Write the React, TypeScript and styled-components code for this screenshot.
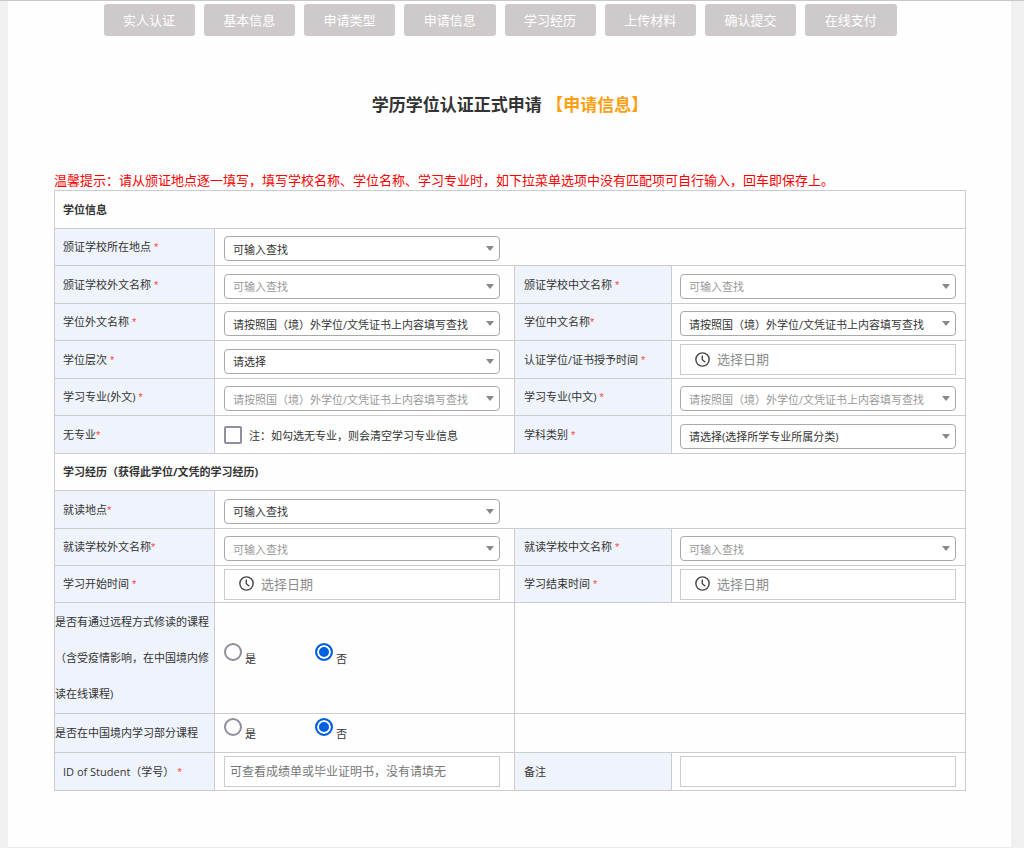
import React from "react";
import styled, { createGlobalStyle, css } from "styled-components";

const line = "#cccccf";
const labelBg = "#eff3fb";
const ink = "#333";
const muted = "#999";

const GlobalStyle = createGlobalStyle`
  *, *::before, *::after { box-sizing: border-box; }
  body {
    margin: 0;
    background: #f0f0f0;
    color: ${ink};
    font-family: "Open Sans", "Noto Sans CJK SC", sans-serif;
    font-size: 11px;
  }
  button, input, select { font-family: inherit; }
`;

const Page = styled.div`
  min-height: 100vh;
  padding: 0 13px 0 8px;
  border-top: 1px solid #c8c8c8;
`;

const Panel = styled.main`
  min-height: calc(100vh - 1px);
  padding: 3px 45px 56px 46px;
  background: #fefefe;
  border-bottom: 1px solid #ececec;
`;

const Steps = styled.nav`
  display: flex;
  justify-content: center;
  padding-right: 20px;
`;

const StepList = styled.div`
  display: grid;
  grid-template-columns: repeat(8, 1fr);
  gap: 9px;
  width: 100%;
  max-width: 793px;
`;

const StepButton = styled.button`
  height: 32px;
  padding: 0;
  border: 0;
  border-radius: 3px;
  background: #cec9ca;
  color: #fff;
  font-size: 13px;
  line-height: 32px;
  white-space: nowrap;
`;

const Title = styled.h1`
  margin: 57px 0 0;
  font-size: 17px;
  line-height: 24px;
  font-weight: 700;
  text-align: center;
`;

const Stage = styled.span`
  color: #ff9f0f;
`;

const Notice = styled.p`
  margin: 53px 0 0;
  color: #ff0000;
  font-size: 13px;
  line-height: 20px;
`;

const FormGrid = styled.form`
  border: 1px solid ${line};
  border-bottom: 0;
`;

const Row = styled.div<{ $size?: "normal" | "medium" | "tall" }>`
  display: grid;
  grid-template-columns: minmax(0, 159fr) minmax(0, 300fr) minmax(0, 157fr) minmax(0, 294fr);
  min-height: ${(p) => (p.$size === "tall" ? 111 : p.$size === "medium" ? 39 : 37)}px;
  border-bottom: 1px solid ${line};

  ${(p) =>
    !p.$size &&
    css`
      &:nth-child(odd),
      &:last-child {
        min-height: 38px;
      }
    `}
`;

const SectionTitle = styled.h2`
  grid-column: 1 / -1;
  align-self: center;
  margin: 0;
  padding: 0 8px;
  font-size: 11px;
  line-height: 36px;
  font-weight: 700;
`;

const LabelCell = styled.div<{ $flush?: boolean }>`
  display: flex;
  align-items: center;
  padding: 0 ${(p) => (p.$flush ? 0 : 8)}px;
  background: ${labelBg};
  line-height: 36px;

  & + div,
  div + & {
    border-left: 1px solid ${line};
  }
  div + & {
    padding-left: 9px;
  }
`;

const FieldCell = styled.div<{ $span?: boolean }>`
  display: flex;
  align-items: center;
  padding: 0 10px 0 9px;
  ${(p) => p.$span && "grid-column: 2 / -1;"}

  &:nth-child(4) {
    padding: 0 9px 0 8px;
  }
`;

const EmptyCell = styled.div`
  grid-column: 3 / -1;
  border-left: 1px solid ${line};
`;

const Star = styled.span`
  color: #ff4444;
  font-family: "Liberation Sans", sans-serif;
`;

const SelectBox = styled.div`
  display: grid;
  align-items: center;
  width: 100%;
  max-width: 276px;
  margin-top: 3px;

  & > * {
    grid-area: 1 / 1;
  }
`;

const Select = styled.select<{ $muted?: boolean }>`
  appearance: none;
  width: 100%;
  height: 25px;
  padding: 1px 24px 0 8px;
  border: 1px solid #a9a9a9;
  border-radius: 4px;
  background: #fff;
  color: ${(p) => (p.$muted ? muted : ink)};
  font-size: 11px;
`;

const Arrow = styled.span`
  justify-self: end;
  margin-right: 6px;
  border: 4px solid transparent;
  border-top: 5px solid #888;
  border-bottom: 0;
  pointer-events: none;
`;

const InputFrame = styled.div`
  display: flex;
  align-items: center;
  gap: 7px;
  width: 100%;
  max-width: 276px;
  height: 31px;
  padding: 0 5px 1px 14px;
  border: 1px solid ${line};
  background: #fff;
`;

const BareInput = styled.input`
  flex: 1;
  min-width: 0;
  padding: 0;
  border: 0;
  outline: 0;
  background: none;
  color: ${ink};
  font-size: 13px;

  &::placeholder {
    color: #8c8c8c;
  }
`;

const TextInput = styled.input`
  width: 100%;
  max-width: 276px;
  height: 31px;
  padding: 0 5px;
  border: 1px solid ${line};
  background: #fff;
  color: ${ink};
  font-size: 12px;

  &::placeholder {
    color: #777;
  }
`;

const CheckLabel = styled.label`
  display: flex;
  align-items: center;
  gap: 7px;
`;

const Checkbox = styled.input`
  appearance: none;
  flex: none;
  width: 18px;
  height: 18px;
  margin: 0;
  border: 2px solid #8f8f9d;
  border-radius: 2px;
  background: #fff;

  &:checked {
    border-color: #0060df;
    background: #0060df;
  }
`;

const RadioGroup = styled.div`
  display: flex;
`;

const RadioLabel = styled.label`
  display: flex;
  align-items: center;
  gap: 3px;
  width: 91px;
`;

const Radio = styled.input`
  appearance: none;
  flex: none;
  width: 18px;
  height: 18px;
  margin: 0 0 12px;
  border: 2px solid #8f8f9d;
  border-radius: 50%;
  background: #fff;

  &:checked {
    border-color: #0060df;
    background: #0060df;
    box-shadow: inset 0 0 0 2px #fff;
  }
`;

const ClockIcon = () => (
  <svg width="15" height="15" viewBox="0 0 14 14" fill="none" stroke="#444" aria-hidden="true">
    <circle cx="7" cy="7" r="6.2" strokeWidth="1.3" />
    <path d="M6.8 3.2V7.2L9.6 9.6" strokeWidth="1.3" />
  </svg>
);

type FieldProps = {
  id: string;
  label: string;
  required?: boolean;
  tight?: boolean;
  span?: boolean;
  children: React.ReactNode;
};

const Field = ({ id, label, required = true, tight, span, children }: FieldProps) => (
  <>
    <LabelCell>
      <label htmlFor={id}>
        {label}
        {required && <Star>{tight ? "*" : " *"}</Star>}
      </label>
    </LabelCell>
    <FieldCell $span={span}>{children}</FieldCell>
  </>
);

type SelectFieldProps = Omit<FieldProps, "children"> & { text: string; muted?: boolean };

const SelectField = ({ text, muted: isMuted, ...field }: SelectFieldProps) => (
  <Field {...field}>
    <SelectBox>
      <Select id={field.id} $muted={isMuted}>
        <option>{text}</option>
      </Select>
      <Arrow />
    </SelectBox>
  </Field>
);

const DateField = (field: Omit<FieldProps, "children">) => (
  <Field {...field}>
    <InputFrame>
      <ClockIcon />
      <BareInput id={field.id} type="text" placeholder="选择日期" />
    </InputFrame>
  </Field>
);

const YesNoRow = ({ name, label, size }: { name: string; label: string; size: "medium" | "tall" }) => (
  <Row $size={size}>
    <LabelCell $flush>
      <span id={`${name}-label`}>{label}</span>
    </LabelCell>
    <FieldCell>
      <RadioGroup role="radiogroup" aria-labelledby={`${name}-label`}>
        <RadioLabel>
          <Radio type="radio" name={name} value="yes" />
          是
        </RadioLabel>
        <RadioLabel>
          <Radio type="radio" name={name} value="no" defaultChecked />
          否
        </RadioLabel>
      </RadioGroup>
    </FieldCell>
    <EmptyCell />
  </Row>
);

const steps = ["实人认证", "基本信息", "申请类型", "申请信息", "学习经历", "上传材料", "确认提交", "在线支付"];
const search = "可输入查找";
const byCertificate = "请按照国（境）外学位/文凭证书上内容填写查找";

export default function App() {
  return (
    <>
      <GlobalStyle />
      <Page>
        <Panel>
          <Steps>
            <StepList>
              {steps.map((step) => (
                <StepButton key={step} type="button">
                  {step}
                </StepButton>
              ))}
            </StepList>
          </Steps>
          <Title>
            学历学位认证正式申请 <Stage>【申请信息】</Stage>
          </Title>
          <Notice>
            温馨提示：请从颁证地点逐一填写，填写学校名称、学位名称、学习专业时，如下拉菜单选项中没有匹配项可自行输入，回车即保存上。
          </Notice>
          <FormGrid>
            <Row>
              <SectionTitle>学位信息</SectionTitle>
            </Row>
            <Row>
              <SelectField id="issue-place" label="颁证学校所在地点" text={search} span />
            </Row>
            <Row>
              <SelectField id="issue-school-foreign" label="颁证学校外文名称" text={search} muted />
              <SelectField id="issue-school-chinese" label="颁证学校中文名称" text={search} muted />
            </Row>
            <Row>
              <SelectField id="degree-foreign" label="学位外文名称" text={byCertificate} />
              <SelectField id="degree-chinese" label="学位中文名称" text={byCertificate} tight />
            </Row>
            <Row>
              <SelectField id="degree-level" label="学位层次" text="请选择" />
              <DateField id="award-date" label="认证学位/证书授予时间" />
            </Row>
            <Row>
              <SelectField id="major-foreign" label="学习专业(外文)" text={byCertificate} muted />
              <SelectField id="major-chinese" label="学习专业(中文)" text={byCertificate} muted />
            </Row>
            <Row>
              <Field id="no-major" label="无专业" tight>
                <CheckLabel>
                  <Checkbox id="no-major" type="checkbox" />
                  注：如勾选无专业，则会清空学习专业信息
                </CheckLabel>
              </Field>
              <SelectField id="subject" label="学科类别" text="请选择(选择所学专业所属分类)" />
            </Row>
            <Row>
              <SectionTitle>学习经历（获得此学位/文凭的学习经历)</SectionTitle>
            </Row>
            <Row>
              <SelectField id="study-place" label="就读地点" text={search} tight span />
            </Row>
            <Row>
              <SelectField id="study-school-foreign" label="就读学校外文名称" text={search} muted tight />
              <SelectField id="study-school-chinese" label="就读学校中文名称" text={search} muted />
            </Row>
            <Row $size="normal">
              <DateField id="study-start" label="学习开始时间" />
              <DateField id="study-end" label="学习结束时间" />
            </Row>
            <YesNoRow
              name="remote"
              size="tall"
              label="是否有通过远程方式修读的课程（含受疫情影响，在中国境内修读在线课程)"
            />
            <YesNoRow name="domestic" size="medium" label="是否在中国境内学习部分课程" />
            <Row>
              <Field id="student-id" label="ID of Student（学号）">
                <TextInput id="student-id" type="text" placeholder="可查看成绩单或毕业证明书，没有请填无" />
              </Field>
              <Field id="remark" label="备注" required={false}>
                <TextInput id="remark" type="text" />
              </Field>
            </Row>
          </FormGrid>
        </Panel>
      </Page>
    </>
  );
}
